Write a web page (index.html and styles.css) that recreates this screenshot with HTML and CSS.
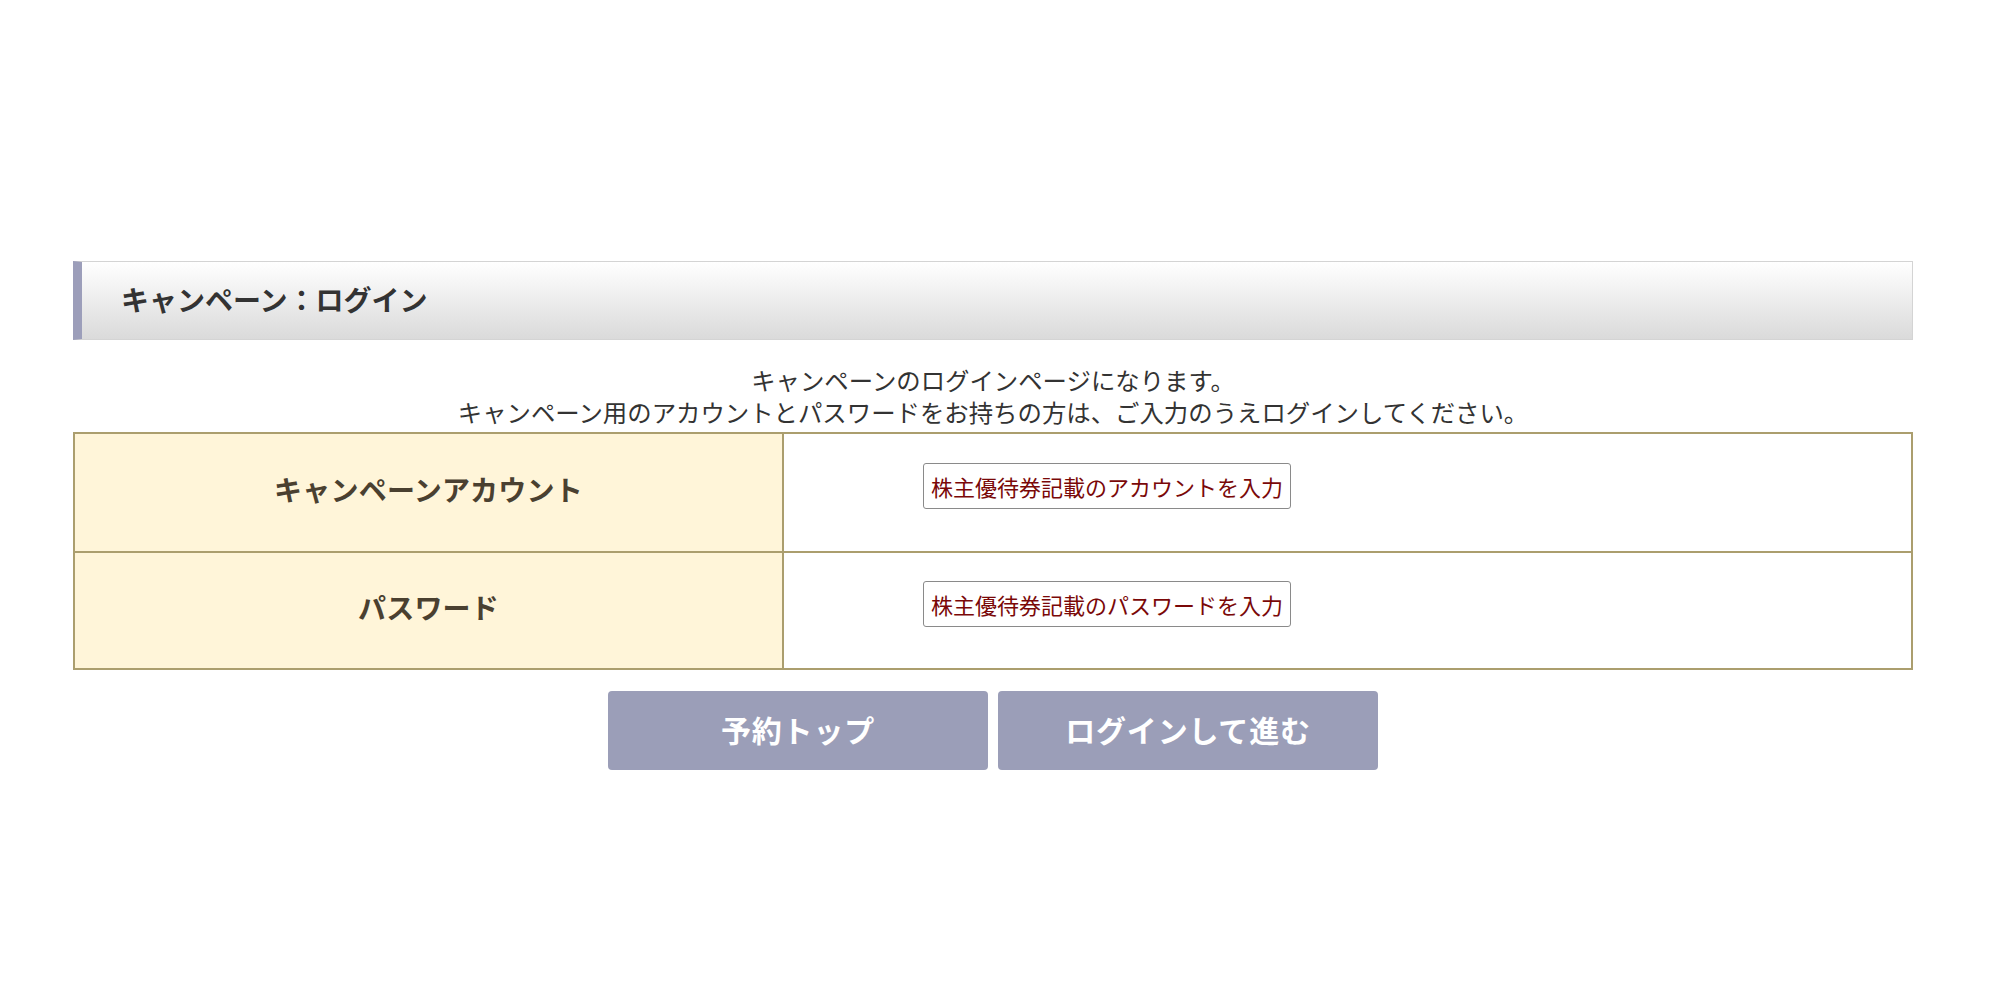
FILE: index.html
```html
<!DOCTYPE html>
<html lang="ja">
<head>
<meta charset="utf-8">
<title>キャンペーン：ログイン</title>
<link rel="stylesheet" href="styles.css">
</head>
<body>
<div class="page">
  <h1 class="heading">キャンペーン：ログイン</h1>
  <p class="intro">キャンペーンのログインページになります。<br>キャンペーン用のアカウントとパスワードをお持ちの方は、ご入力のうえログインしてください。</p>
  <table class="form">
    <tr class="row-first">
      <th>キャンペーンアカウント</th>
      <td><span class="field">株主優待券記載のアカウントを入力</span></td>
    </tr>
    <tr class="row-second">
      <th>パスワード</th>
      <td><span class="field">株主優待券記載のパスワードを入力</span></td>
    </tr>
  </table>
  <div class="actions">
    <button class="btn" type="button">予約トップ</button>
    <button class="btn" type="button">ログインして進む</button>
  </div>
</div>
</body>
</html>
```
FILE: styles.css
```css
html, body {
  margin: 0;
  padding: 0;
  background: #ffffff;
}
body {
  font-family: "Noto Sans CJK JP", "Noto Sans", sans-serif;
  color: #333333;
}
.page {
  margin: 0 84px 0 73px;
  padding-top: 261px;
}
.heading {
  box-sizing: border-box;
  height: 79px;
  margin: 0;
  display: flex;
  align-items: center;
  padding-left: 39px;
  padding-bottom: 3px;
  border: 1px solid #d4d4d4;
  border-left: 9px solid #9c9eba;
  background: linear-gradient(#ffffff, #dadada);
  font-size: 28px;
  font-weight: bold;
  color: #333333;
  letter-spacing: 0;
}
.intro {
  margin: 24px 0 4px;
  text-align: center;
  font-size: 24.4px;
  line-height: 32px;
  color: #333333;
}
.form {
  width: 100%;
  border-collapse: collapse;
  border: 2px solid #ab9e6e;
}
.form th,
.form td {
  border: 2px solid #ab9e6e;
  padding: 0;
}
.row-first {
  height: 119px;
}
.row-second {
  height: 117px;
}
.form th {
  width: 707px;
  padding-bottom: 8px;
  background: #fff5d9;
  font-size: 28px;
  font-weight: bold;
  color: #4a4030;
  text-align: center;
  letter-spacing: 0.2px;
}
.form td {
  padding-left: 139px;
  padding-bottom: 14px;
  vertical-align: middle;
}
.field {
  display: inline-flex;
  align-items: center;
  box-sizing: border-box;
  width: 368px;
  height: 46px;
  padding: 0 7px;
  border: 1px solid #8a8a8a;
  border-radius: 3px;
  background: #ffffff;
  font-size: 22px;
  color: #7a0808;
  white-space: nowrap;
}
.actions {
  display: flex;
  justify-content: center;
  gap: 10px;
  margin-top: 21px;
}
.btn {
  width: 380px;
  height: 79px;
  padding: 0 0 4px;
  border: none;
  border-radius: 4px;
  background: #9b9eb8;
  color: #ffffff;
  font-family: "Noto Sans CJK JP", "Noto Sans", sans-serif;
  font-size: 30px;
  font-weight: bold;
  letter-spacing: 0.8px;
  cursor: pointer;
}
```
